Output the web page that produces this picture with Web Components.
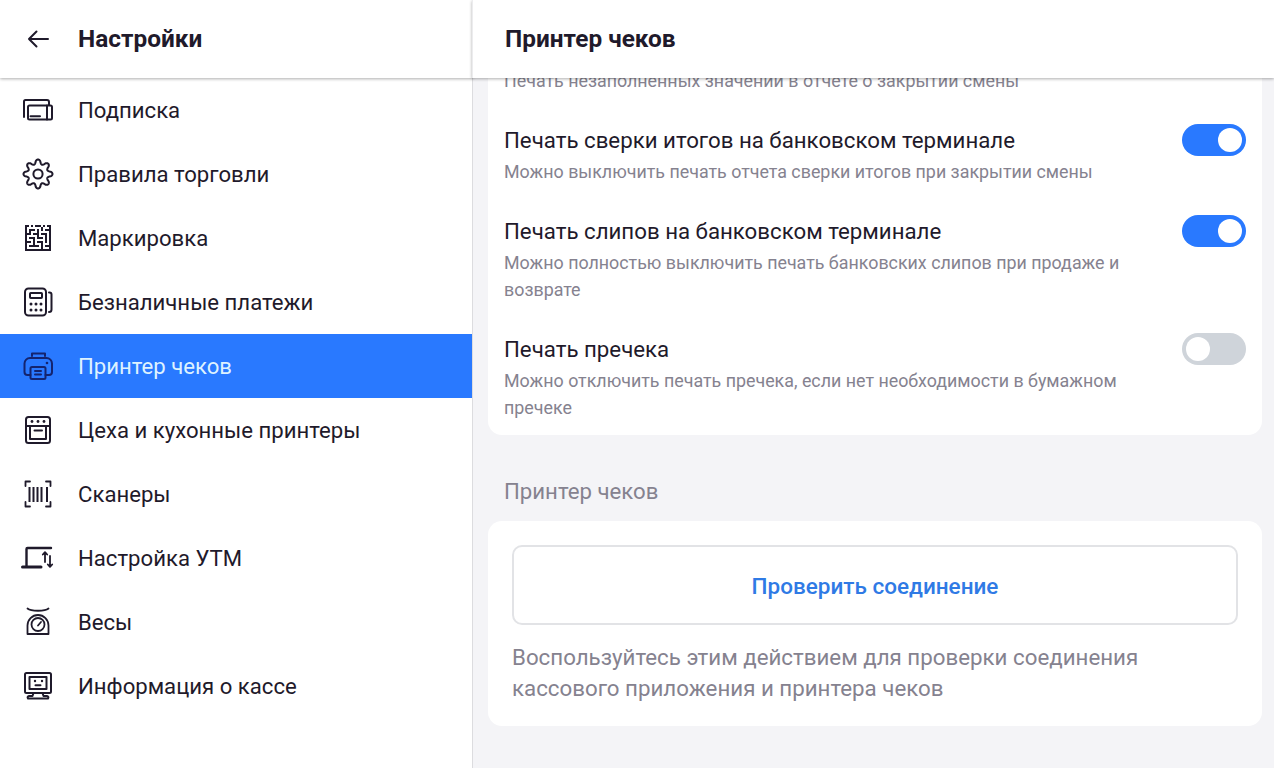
<!DOCTYPE html>
<html lang="ru"><head><meta charset="utf-8"><title>Настройки</title>
<style>
html,body{margin:0;padding:0;height:100%;overflow:hidden}
body{font-family:Roboto,"Liberation Sans",sans-serif;color:#1f1a2b;background:#fff}
</style></head><body>
<settings-app></settings-app>
<script>
function gear(){
  let p='';
  for(let i=0;i<=240;i++){
    const t=i/240*Math.PI*2, c=Math.cos(8*t), s=Math.sign(c)*Math.pow(Math.abs(c),.7);
    const r=12.3+2.2*s;
    p+=(i?'L':'M')+(20+r*Math.sin(t)).toFixed(2)+' '+(20-r*Math.cos(t)).toFixed(2);
  }
  return `<path d="${p}Z"/><circle cx="20" cy="20" r="4.6"/>`;
}
function matrix(){
  const g=['##.#.###.#.##','#.......#...#','#.###.#.#.###','#.#...#.....#','###.###.###.#','#.....#...#.#','#.###.###.#.#','#...#.....#.#','###.#.###.#.#','#...#...#...#','#.#####.#.###','#.......#...#','#############'];
  let o='';
  g.forEach((row,y)=>[...row].forEach((c,x)=>{if(c==='#')o+=`<rect x="${7+x*2}" y="${7+y*2}" width="2" height="2" fill="currentColor" stroke="none"/>`}));
  return o;
}
const ICONS={
 back:'<path d="M30 20H11M18.5 12.5 11 20l7.5 7.5"/>',
 sub:'<path d="M6 27V11.5a1.5 1.5 0 0 1 1.5-1.5H29a2 2 0 0 1 2 2v3"/><rect x="10" y="15.5" width="24" height="14" rx="1.5"/><path d="M12.5 26.2H22M29 15.5v14"/>',
 gear:gear(),
 matrix:matrix(),
 calc:'<rect x="7" y="6.5" width="21" height="27" rx="3.5"/><rect x="12" y="11" width="12" height="5" rx=".8"/><path d="M31 10.5h.5a2 2 0 0 1 2 2v15a2.500 2.500 0 0 1-2.500 2.500H31"/><g fill="currentColor" stroke="none"><circle cx="13" cy="22" r="1.500"/><circle cx="18" cy="22" r="1.500"/><circle cx="23" cy="22" r="1.500"/><circle cx="13" cy="28" r="1.500"/><circle cx="18" cy="28" r="1.500"/><circle cx="23" cy="28" r="1.500"/></g>',
 printer:'<path d="M14 10V7.500h13V10M12.500 29H9.500A3 3 0 0 1 6.500 26V17.500A5.500 5.500 0 0 1 12 12H28.500A5.500 5.500 0 0 1 34 17.500V26a3 3 0 0 1-3 3H27.500"/><rect x="12.500" y="21" width="15" height="12" rx="1.500"/><path d="M17 25h6M17 28.500h6"/><circle cx="29" cy="17" r="1.300" fill="currentColor" stroke="none"/>',
 oven:'<rect x="8" y="7" width="24" height="26" rx="2.500"/><path d="M8 16H32M12 16V29H28V16M16.500 20.500H24"/><g fill="currentColor" stroke="none"><circle cx="14" cy="11.500" r="1.400"/><circle cx="20" cy="11.500" r="1.400"/><circle cx="26" cy="11.500" r="1.400"/></g>',
 scan:'<path d="M12 7.500H7.500V12M28 7.500h4.500V12M7.500 28v4.500H12M32.500 28v4.500H28" stroke-width="1.800"/><path d="M11.500 13V28M15.500 13V28M19.500 13V28M23.500 13V28M29 13V28" stroke-width="2" stroke-linecap="butt"/>',
 utm:'<path d="M8.500 28V11a1 1 0 0 1 1-1H33" stroke-width="2.400"/><path d="M4.500 29H23" stroke-width="3"/><path d="M27 24V14.500M24.800 16.500 27 14.200l2.200 2.300M32 18v10.500M29.800 26.500 32 28.800l2.200-2.300" stroke-width="1.800"/>',
 scale:'<path d="M9.500 6.500c3.500 3 17.500 3 21 0" stroke-width="1.800"/><path d="M9.500 32H30.500V23.500A10.500 10.500 0 0 0 9.500 23.500Z" stroke-width="1.800"/><circle cx="20" cy="22.500" r="6.500" stroke-width="1.800"/><path d="M20 23.500l3-3.500" stroke-width="1.800"/>',
 info:'<rect x="7" y="7" width="26" height="20" rx="1.500"/><rect x="11.500" y="11" width="17" height="12"/><path d="M15.500 27 14.500 30H11a1.500 1.500 0 0 0-1 2.500H30A1.500 1.500 0 0 0 29 30H25.500L24.500 27M17.500 19.300h5"/><g fill="currentColor" stroke="none"><circle cx="17" cy="15" r="1.200"/><circle cx="24" cy="15" r="1.200"/></g>'
};
function el(name,html){
  customElements.define(name,class extends HTMLElement{
    constructor(){super();const r=this.attachShadow({mode:'open'});r.innerHTML=html;}
  });
}
customElements.define('app-icon',class extends HTMLElement{
  connectedCallback(){
    const r=this.shadowRoot||this.attachShadow({mode:'open'});
    r.innerHTML=`<style>:host{display:block;width:40px;height:40px;flex:none}svg{display:block}</style>
    <svg width="40" height="40" viewBox="0 0 40 40" fill="none" stroke="currentColor" stroke-width="2" stroke-linecap="round" stroke-linejoin="round">${ICONS[this.getAttribute('name')]||''}</svg>`;
  }
});
customElements.define('nav-item',class extends HTMLElement{
  connectedCallback(){
    const r=this.shadowRoot||this.attachShadow({mode:'open'});
    r.innerHTML=`<style>
    :host{display:flex;align-items:center;height:64px;padding-left:18px;gap:20px;font-size:22.150px;color:#1f1a2b}
    :host([active]){background:#2979ff;color:#def2ff}
    :host([active]) app-icon{color:#14246e}
    </style><app-icon name="${this.getAttribute('icon')}"></app-icon><span><slot></slot></span>`;
  }
});
el('app-header',`<style>
 :host{display:flex;align-items:center;box-sizing:border-box;height:78px;padding-bottom:1px;flex:none;background:#fff;font-size:24.400px;line-height:30px;font-weight:700;color:#1f1a2b;box-shadow:0 1px 3px rgba(0,0,0,.32);position:relative;z-index:2}
 </style><slot></slot>`);
el('app-toggle',`<style>
 :host{display:flex;flex:none;align-items:center;justify-content:flex-end;box-sizing:border-box;width:64px;height:32px;padding:0 4px;border-radius:16px;background:#2979ff}
 :host([off]){background:#cfd4da;justify-content:flex-start}
 i{display:block;width:24px;height:24px;border-radius:50%;background:#fff}
 </style><i></i>`);
el('setting-row',`<style>
 :host{display:flex;justify-content:space-between;align-items:flex-start;margin-top:32px}
 :host(:first-child){margin-top:0}
 .t{width:640px}
 .title{font-size:22.250px;line-height:28px;min-height:28px;margin-bottom:4px;color:#1f1a2b}
 .sub{font-size:17.850px;line-height:27px;color:#85828f}
 ::slotted(app-toggle){margin-top:-2px}
 </style><div class="t"><div class="title"><slot name="title"></slot></div><div class="sub"><slot name="sub"></slot></div></div><slot name="ctl"></slot>`);
el('white-card',`<style>:host{display:block;background:#fff;border-radius:14px}</style><slot></slot>`);
el('check-panel',`<style>
 :host{display:block;padding:24px 24px 22px}
 .btn{display:flex;align-items:center;justify-content:center;height:80px;box-sizing:border-box;padding-top:1px;border:2px solid #e2e3e6;border-radius:10px;color:#2f7ae5;font-size:22.500px;font-weight:500}
 .help{margin-top:17px;font-size:22.300px;line-height:31px;color:#85828f}
 </style><div class="btn"><slot name="btn"></slot></div><div class="help"><slot name="help"></slot></div>`);
el('settings-app',`<style>
 :host{display:flex;width:1274px;height:768px;overflow:hidden;background:#fff}
 .left{display:flex;flex-direction:column;width:472px;flex:none;border-right:1px solid #dcdcdf}
 .left app-header{margin-right:-1px}
 .back{display:flex;align-items:center;gap:20px;padding-left:18px}
 .right{display:flex;flex-direction:column;flex:1;min-width:0}
 .right app-header{border-left:1px solid #ececee;margin-left:-1px}
 .head-t{padding-left:32px}
 .main{flex:1;overflow:hidden;background:#f4f4f7;padding:0 12px 0 15px}
 .rows{margin-top:-57px;padding:14px 16px}
 .label{font-size:22.200px;line-height:28px;color:#85828f;margin:42px 16px 16px}
 </style>
 <div class="left">
  <app-header><div class="back"><app-icon name="back"></app-icon><span>Настройки</span></div></app-header>
  <nav>
   <nav-item icon="sub">Подписка</nav-item>
   <nav-item icon="gear">Правила торговли</nav-item>
   <nav-item icon="matrix">Маркировка</nav-item>
   <nav-item icon="calc">Безналичные платежи</nav-item>
   <nav-item icon="printer" active>Принтер чеков</nav-item>
   <nav-item icon="oven">Цеха и кухонные принтеры</nav-item>
   <nav-item icon="scan">Сканеры</nav-item>
   <nav-item icon="utm">Настройка УТМ</nav-item>
   <nav-item icon="scale">Весы</nav-item>
   <nav-item icon="info">Информация о кассе</nav-item>
  </nav>
 </div>
 <div class="right">
  <app-header><span class="head-t">Принтер чеков</span></app-header>
  <div class="main">
   <white-card class="rows">
    <setting-row><span slot="sub">Печать незаполненных значении в отчете о закрытии смены</span></setting-row>
    <setting-row><span slot="title">Печать сверки итогов на банковском терминале</span><span slot="sub">Можно выключить печать отчета сверки итогов при закрытии смены</span><app-toggle slot="ctl"></app-toggle></setting-row>
    <setting-row><span slot="title">Печать слипов на банковском терминале</span><span slot="sub">Можно полностью выключить печать банковских слипов при продаже и возврате</span><app-toggle slot="ctl"></app-toggle></setting-row>
    <setting-row><span slot="title">Печать пречека</span><span slot="sub">Можно отключить печать пречека, если нет необходимости в бумажном пречеке</span><app-toggle slot="ctl" off></app-toggle></setting-row>
   </white-card>
   <div class="label">Принтер чеков</div>
   <white-card><check-panel><span slot="btn">Проверить соединение</span><span slot="help">Воспользуйтесь этим действием для проверки соединения кассового приложения и принтера чеков</span></check-panel></white-card>
  </div>
 </div>`);
</script>
</body></html>
